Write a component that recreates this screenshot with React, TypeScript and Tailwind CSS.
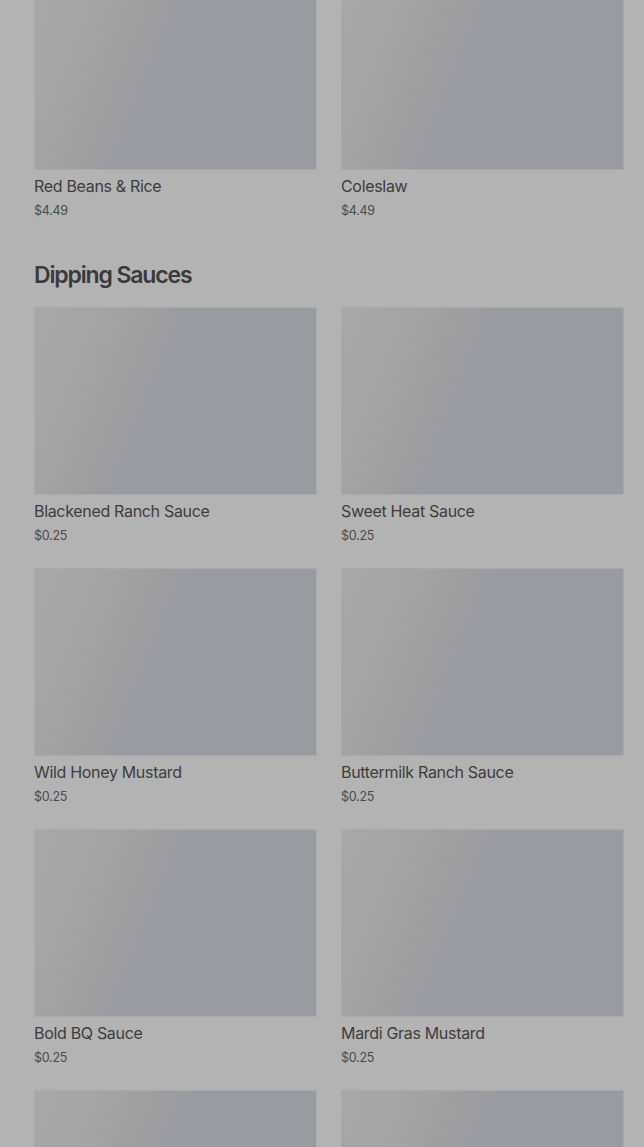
const sides = [
  { name: 'Red Beans & Rice', price: '$4.49' },
  { name: 'Coleslaw', price: '$4.49' },
];

const sauces = [
  { name: 'Blackened Ranch Sauce', price: '$0.25' },
  { name: 'Sweet Heat Sauce', price: '$0.25' },
  { name: 'Wild Honey Mustard', price: '$0.25' },
  { name: 'Buttermilk Ranch Sauce', price: '$0.25' },
  { name: 'Bold BQ Sauce', price: '$0.25' },
  { name: 'Mardi Gras Mustard', price: '$0.25' },
  { name: 'Blackened Ranch Sauce', price: '$0.25' },
  { name: 'Sweet Heat Sauce', price: '$0.25' },
];

type Item = { name: string; price: string };

function ItemCard({ item }: { item: Item }) {
  return (
    <div className="flex flex-col">
      <div className="h-[188px] w-full border border-[#a9a9a9] bg-[linear-gradient(112deg,#a8a8a8_0%,#a4a4a4_20%,#9f9f9f_32%,#999ba2_44%,#999ba2_100%)]" />
      <p className="mt-[4px] text-[16px] leading-6 tracking-[-0.02em] text-[#3d3d3d]">{item.name}</p>
      <p className="mt-[3px] text-[12.5px] leading-5 tracking-[-0.02em] text-[#4a4a4a]">{item.price}</p>
    </div>
  );
}

export default function App() {
  return (
    <div
      className="h-[1147px] overflow-hidden bg-[#b3b3b3] pl-[34px] pr-[20px]"
      style={{ fontFamily: 'Inter, "Liberation Sans", sans-serif' }}
    >
      <div className="-mt-[18px]">
        <div className="grid grid-cols-2 gap-x-[24px] gap-y-[22px]">
          {sides.map((s) => (
            <ItemCard key={s.name} item={s} />
          ))}
        </div>

        <h2 className="mt-[38px] mb-[16px] text-[23px] leading-8 font-semibold tracking-[-0.05em] text-[#3a3a3a]">
          Dipping Sauces
        </h2>

        <div className="grid grid-cols-2 gap-x-[24px] gap-y-[22px]">
          {sauces.map((s, i) => (
            <ItemCard key={i} item={s} />
          ))}
        </div>
      </div>
    </div>
  );
}
